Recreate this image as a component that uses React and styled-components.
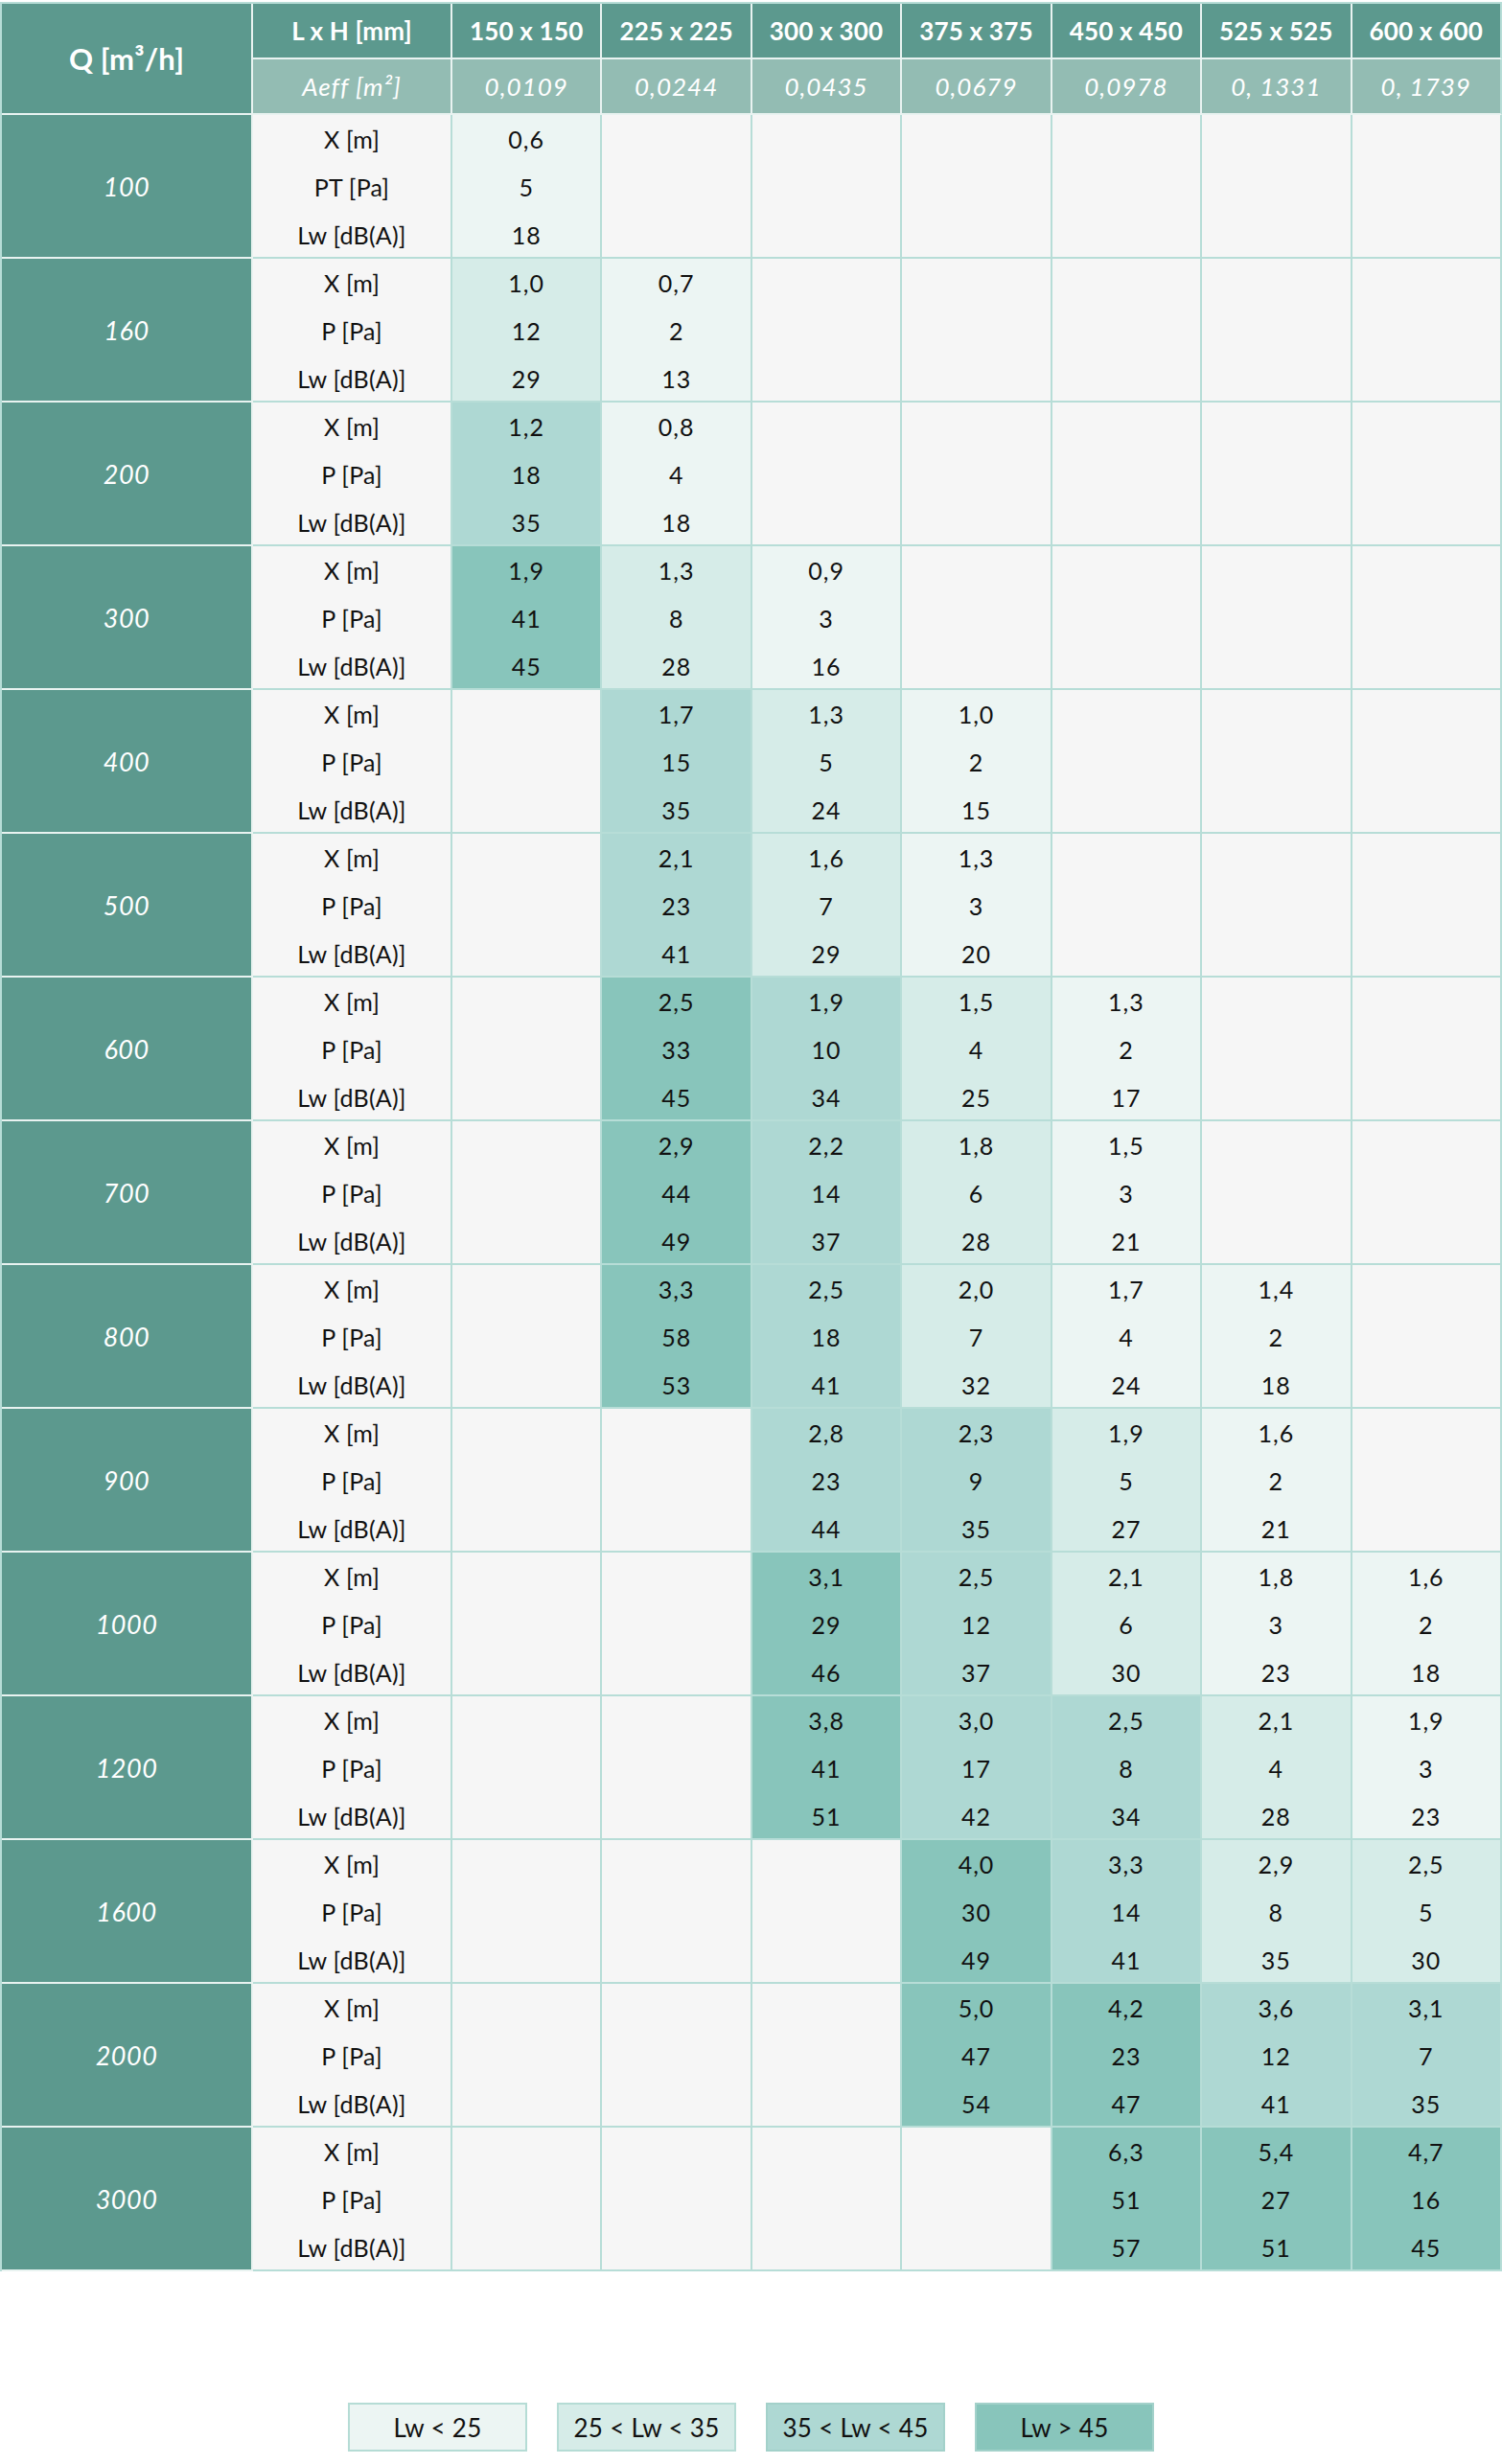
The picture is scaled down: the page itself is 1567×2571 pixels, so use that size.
import React from 'react';
import styled, { createGlobalStyle } from 'styled-components';

const GlobalStyle = createGlobalStyle`
  html, body { margin: 0; padding: 0; background: #ffffff; }
  body { font-family: Lato, "Open Sans", "Liberation Sans", sans-serif; }
`;

const LEVELS = {
  0: '#f6f6f6',
  1: '#ecf5f3',
  2: '#d6ece8',
  3: '#aed8d3',
  4: '#88c5bb',
};

const GRID = '#b7ddd7';
const HEAD_LINE = '#e9f3f1';

const Page = styled.div`
  width: 1567px;
  min-height: 2571px;
  padding-top: 2px;
  box-sizing: border-box;
  display: flex;
  flex-direction: column;
`;

const Table = styled.table`
  width: 1567px;
  table-layout: fixed;
  border-collapse: separate;
  border-spacing: 0;
  border-top: 2px solid ${GRID};
  border-left: 2px solid ${GRID};
`;

const HeadCell = styled.th`
  height: 56px;
  padding: 0;
  background: ${(p) => (p.$sub ? '#93bcb3' : '#5c998e')};
  color: #ffffff;
  font-weight: ${(p) => (p.$sub ? 400 : 700)};
  font-style: ${(p) => (p.$sub ? 'italic' : 'normal')};
  font-size: ${(p) => (p.$big ? '31px' : p.$sub ? '26px' : '26px')};
  letter-spacing: ${(p) => (p.$sub ? '1px' : '0.2px')};
  text-align: center;
  vertical-align: middle;
  border-right: 2px solid ${HEAD_LINE};
  border-bottom: 2px solid ${HEAD_LINE};
  &:last-child { border-right-color: ${GRID}; }
`;

const QCell = styled.th`
  height: 148px;
  padding: 0;
  background: #5c998e;
  color: #ffffff;
  font-weight: 400;
  font-style: italic;
  font-size: 27px;
  letter-spacing: 0.5px;
  text-align: center;
  vertical-align: middle;
  border-right: 2px solid ${HEAD_LINE};
  border-bottom: 2px solid ${HEAD_LINE};
`;

const DataCell = styled.td`
  height: 148px;
  padding: 0;
  background: ${(p) => LEVELS[p.$level || 0]};
  border-right: 2px solid ${GRID};
  border-bottom: 2px solid ${GRID};
  vertical-align: top;
`;

const Stack = styled.div`
  height: 148px;
  display: grid;
  grid-template-rows: repeat(3, 50px);
  align-items: center;
  justify-items: center;
`;

const Line = styled.span`
  font-size: 25px;
  letter-spacing: ${(p) => (p.$num ? '1px' : '0.2px')};
  color: #111111;
  line-height: 1;
`;

const LegendRow = styled.div`
  margin-top: 137px;
  display: flex;
  justify-content: center;
  gap: 31px;
`;

const LegendBox = styled.div`
  width: 187px;
  height: 51px;
  box-sizing: border-box;
  border: 2px solid ${(p) => (p.$level >= 3 ? '#a3d1ca' : '#b5dcd5')};
  background: ${(p) => LEVELS[p.$level]};
  display: flex;
  align-items: center;
  justify-content: center;
  font-size: 26px;
  letter-spacing: 0.3px;
  color: #111111;
`;

const sizes = ['150 x 150', '225 x 225', '300 x 300', '375 x 375', '450 x 450', '525 x 525', '600 x 600'];
const areas = ['0,0109', '0,0244', '0,0435', '0,0679', '0,0978', '0, 1331', '0, 1739'];

const rows = [
  ['100', 0, [[1, '0,6', '5', '18']]],
  ['160', 0, [[2, '1,0', '12', '29'], [1, '0,7', '2', '13']]],
  ['200', 0, [[3, '1,2', '18', '35'], [1, '0,8', '4', '18']]],
  ['300', 0, [[4, '1,9', '41', '45'], [2, '1,3', '8', '28'], [1, '0,9', '3', '16']]],
  ['400', 1, [[3, '1,7', '15', '35'], [2, '1,3', '5', '24'], [1, '1,0', '2', '15']]],
  ['500', 1, [[3, '2,1', '23', '41'], [2, '1,6', '7', '29'], [1, '1,3', '3', '20']]],
  ['600', 1, [[4, '2,5', '33', '45'], [3, '1,9', '10', '34'], [2, '1,5', '4', '25'], [1, '1,3', '2', '17']]],
  ['700', 1, [[4, '2,9', '44', '49'], [3, '2,2', '14', '37'], [2, '1,8', '6', '28'], [1, '1,5', '3', '21']]],
  ['800', 1, [[4, '3,3', '58', '53'], [3, '2,5', '18', '41'], [2, '2,0', '7', '32'], [1, '1,7', '4', '24'], [1, '1,4', '2', '18']]],
  ['900', 2, [[3, '2,8', '23', '44'], [3, '2,3', '9', '35'], [2, '1,9', '5', '27'], [1, '1,6', '2', '21']]],
  ['1000', 2, [[4, '3,1', '29', '46'], [3, '2,5', '12', '37'], [2, '2,1', '6', '30'], [1, '1,8', '3', '23'], [1, '1,6', '2', '18']]],
  ['1200', 2, [[4, '3,8', '41', '51'], [3, '3,0', '17', '42'], [3, '2,5', '8', '34'], [2, '2,1', '4', '28'], [1, '1,9', '3', '23']]],
  ['1600', 3, [[4, '4,0', '30', '49'], [3, '3,3', '14', '41'], [2, '2,9', '8', '35'], [2, '2,5', '5', '30']]],
  ['2000', 3, [[4, '5,0', '47', '54'], [4, '4,2', '23', '47'], [3, '3,6', '12', '41'], [3, '3,1', '7', '35']]],
  ['3000', 4, [[4, '6,3', '51', '57'], [4, '5,4', '27', '51'], [4, '4,7', '16', '45']]],
];

const legend = [
  [1, 'Lw < 25'],
  [2, '25 < Lw < 35'],
  [3, '35 < Lw < 45'],
  [4, 'Lw > 45'],
];

function LinesCell({ level, lines, num }) {
  return (
    <DataCell $level={level}>
      {lines && (
        <Stack>
          {lines.map((t, i) => (
            <Line key={i} $num={num}>{t}</Line>
          ))}
        </Stack>
      )}
    </DataCell>
  );
}

export default function App() {
  return (
    <Page>
      <GlobalStyle />
      <Table>
        <colgroup>
          <col style={{ width: 262 }} />
          <col style={{ width: 208 }} />
          {sizes.map((s) => (
            <col key={s} />
          ))}
        </colgroup>
        <thead>
          <tr>
            <HeadCell rowSpan={2} $big>
              Q [m³/h]
            </HeadCell>
            <HeadCell>L x H [mm]</HeadCell>
            {sizes.map((s) => (
              <HeadCell key={s}>{s}</HeadCell>
            ))}
          </tr>
          <tr>
            <HeadCell $sub>Aeff [m²]</HeadCell>
            {areas.map((a) => (
              <HeadCell key={a} $sub>
                {a}
              </HeadCell>
            ))}
          </tr>
        </thead>
        <tbody>
          {rows.map(([q, start, cells], ri) => {
            const labels = ['X [m]', ri === 0 ? 'PT [Pa]' : 'P [Pa]', 'Lw [dB(A)]'];
            const all = Array.from({ length: 7 }, (_, i) => {
              const c = i >= start ? cells[i - start] : undefined;
              return c || null;
            });
            return (
              <tr key={q}>
                <QCell>{q}</QCell>
                <LinesCell level={0} lines={labels} />
                {all.map((c, i) =>
                  c ? (
                    <LinesCell key={i} level={c[0]} lines={[c[1], c[2], c[3]]} num />
                  ) : (
                    <LinesCell key={i} level={0} />
                  )
                )}
              </tr>
            );
          })}
        </tbody>
      </Table>
      <LegendRow>
        {legend.map(([lvl, text]) => (
          <LegendBox key={lvl} $level={lvl}>
            {text}
          </LegendBox>
        ))}
      </LegendRow>
    </Page>
  );
}
